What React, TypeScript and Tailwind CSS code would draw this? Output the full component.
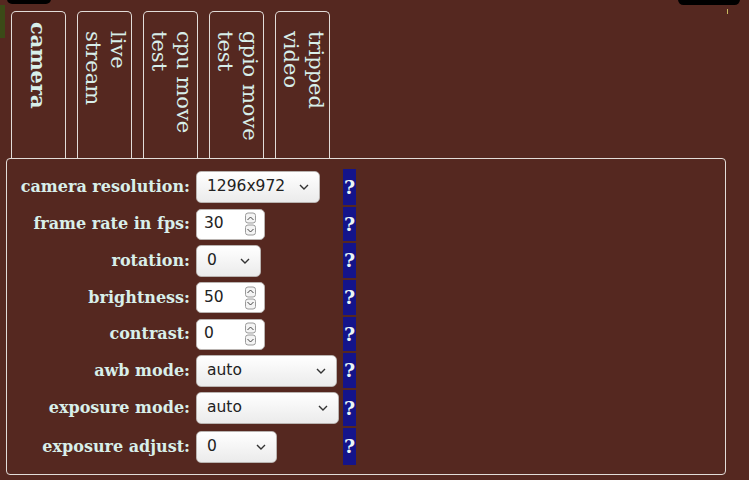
import React from "react";

const serif = { fontFamily: '"DejaVu Serif", serif' } as const;
const sans = { fontFamily: '"DejaVu Sans", sans-serif' } as const;

function Chevron() {
  return (
    <svg width="10" height="6" viewBox="0 0 10 6" className="pointer-events-none absolute right-[10px] top-1/2 -translate-y-1/2">
      <path d="M1 1 L5 5 L9 1" fill="none" stroke="#333" strokeWidth="1.4" />
    </svg>
  );
}

function Select({ value, w }: { value: string; w: string }) {
  return (
    <div className={`relative h-[32px] ${w} rounded-[5px] border border-[#b9b3b0] bg-gradient-to-b from-white to-[#ebebeb] flex items-center pl-[10px] text-[15.5px] text-[#222]`} style={sans}>
      {value}
      <Chevron />
    </div>
  );
}

function Spin() {
  return (
    <div className="absolute right-[8px] top-1/2 -translate-y-1/2 flex flex-col gap-[1px]">
      <div className="w-[11px] h-[11px] rounded-[3px] border border-[#9a9a9a] bg-[#f4f4f4] flex items-center justify-center">
        <svg width="7" height="4" viewBox="0 0 7 4"><path d="M0.5 3.5 L3.5 0.5 L6.5 3.5" fill="none" stroke="#444" strokeWidth="1" /></svg>
      </div>
      <div className="w-[11px] h-[11px] rounded-[3px] border border-[#9a9a9a] bg-[#f4f4f4] flex items-center justify-center">
        <svg width="7" height="4" viewBox="0 0 7 4"><path d="M0.5 0.5 L3.5 3.5 L6.5 0.5" fill="none" stroke="#444" strokeWidth="1" /></svg>
      </div>
    </div>
  );
}

function NumberInput({ value }: { value: string }) {
  return (
    <div className="relative h-[31px] w-[69px] rounded-[5px] border border-[#b9b3b0] bg-white flex items-center pl-[7px] text-[15.5px] text-[#222]" style={sans}>
      {value}
      <Spin />
    </div>
  );
}

type Row = { label: string; ctrl: React.ReactNode; h: string };

const rows: Row[] = [
  { label: "camera resolution:", ctrl: <Select value="1296x972" w="w-[124px]" />, h: "h-[36px]" },
  { label: "frame rate in fps:", ctrl: <NumberInput value="30" />, h: "h-[34px]" },
  { label: "rotation:", ctrl: <Select value="0" w="w-[65px]" />, h: "h-[35px]" },
  { label: "brightness:", ctrl: <NumberInput value="50" />, h: "h-[35px]" },
  { label: "contrast:", ctrl: <NumberInput value="0" />, h: "h-[34px]" },
  { label: "awb mode:", ctrl: <Select value="auto" w="w-[141px]" />, h: "h-[35px]" },
  { label: "exposure mode:", ctrl: <Select value="auto" w="w-[143px]" />, h: "h-[36px]" },
  { label: "exposure adjust:", ctrl: <Select value="0" w="w-[81px]" />, h: "h-[37px]" },
];

const tabs: { lines: string[]; bold?: boolean }[] = [
  { lines: ["camera"], bold: true },
  { lines: ["live", "stream"] },
  { lines: ["cpu move", "test"] },
  { lines: ["gpio move", "test"] },
  { lines: ["tripped", "video"] },
];

export default function App() {
  return (
    <div className="relative w-[749px] h-[480px] overflow-hidden bg-[#552820] text-[#d8efea]" style={serif}>
      {/* overlays at top edges */}
      <div className="absolute left-[7px] top-[-6px] w-[44px] h-[10px] rounded-[6px] bg-black" />
      <div className="absolute left-0 top-[5px] w-[5px] h-[33px] bg-[#3b4a17]" />
      <div className="absolute left-[678px] top-[-6px] w-[62px] h-[11px] rounded-[6px] bg-black" />
      <div className="absolute left-[727px] top-[9px] w-[1px] h-[5px] bg-[#c8b860]" />

      <div className="pt-[11px] pl-[11px] flex gap-[11px]">
        {tabs.map((t, i) => (
          <div
            key={i}
            className={`w-[55px] h-[148px] border border-b-0 border-[#e2dcd8] rounded-t-[5px] flex justify-center ${t.bold ? "pt-[10px]" : "pt-[19px]"}`}
          >
            <div
              className={`leading-[25px] ${t.bold ? "font-bold text-[21px]" : "text-[21px]"}`}
              style={{ writingMode: "vertical-rl" }}
            >
              {t.lines.map((l, j) => (
                <div key={j}>{l}</div>
              ))}
            </div>
          </div>
        ))}
      </div>

      <div className="ml-[6px] w-[720px] h-[317px] -mt-[1px] border border-[#e2dcd8] rounded-[4px] pt-[10px]">
        <div className="flex flex-col gap-[2px]">
          {rows.map((r, i) => (
            <div key={i} className={`flex items-center ${r.h}`}>
              <div className="w-[183px] text-right font-bold text-[16px]">{r.label}</div>
              <div className="w-[153px] pl-[6px] flex items-center">{r.ctrl}</div>
              <div className="w-[13px] self-stretch bg-[#14148a] flex items-center justify-center font-bold text-[19px] text-[#eaf6f6]">?</div>
            </div>
          ))}
        </div>
      </div>
    </div>
  );
}
